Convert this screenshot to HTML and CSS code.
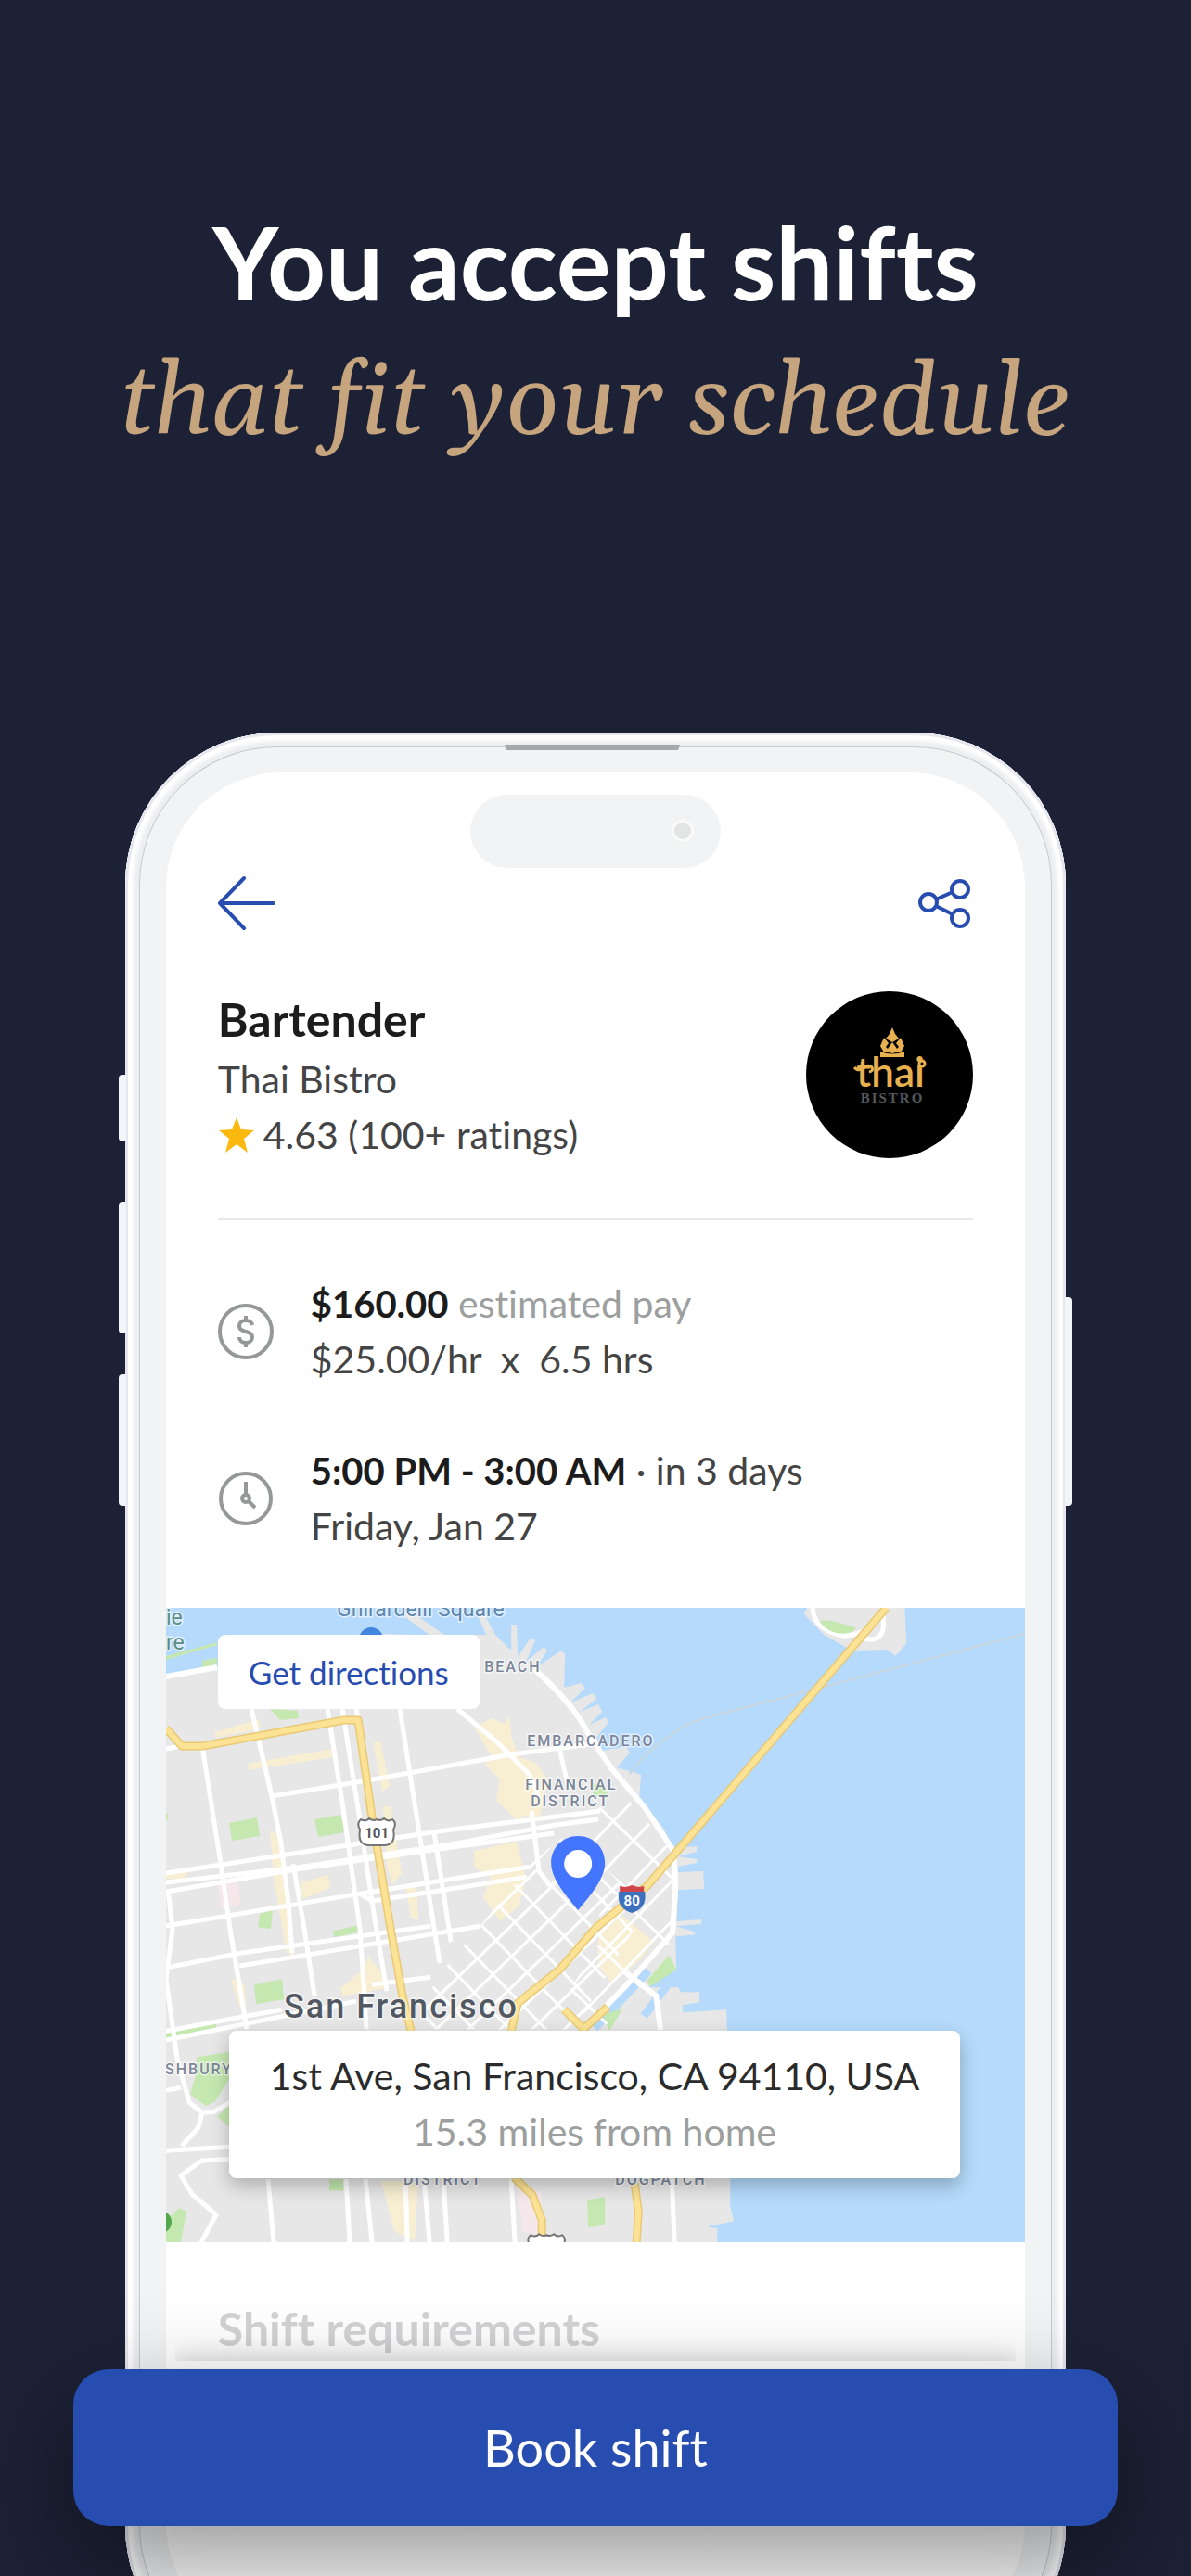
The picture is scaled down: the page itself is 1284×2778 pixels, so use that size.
FILE: index.html
```html
<!DOCTYPE html>
<html lang="en">
<head>
<meta charset="UTF-8">
<meta name="viewport" content="width=device-width, initial-scale=1.0">
<title>Book a shift</title>
<link rel="stylesheet" href="styles.css">
</head>
<body>
  <div class="page">
    <h1 class="headline">
      You accept shifts
      <em>that fit your schedule</em>
    </h1>

    <div class="phone">
      <span class="side-key key-mute"></span>
      <span class="side-key key-up"></span>
      <span class="side-key key-down"></span>
      <span class="side-key key-power"></span>
      <span class="speaker"></span>

      <main class="screen">
        <div class="island"><span class="camera"></span></div>

        <nav class="topbar">
          <a href="#" class="icon-link" aria-label="Back">
            <svg width="64" height="60" viewBox="0 0 64 60" fill="none" stroke="#284db1" stroke-width="4" stroke-linecap="round" stroke-linejoin="round">
              <path d="M60 30H2M28 3L2 30l26 27"/>
            </svg>
          </a>
          <a href="#" class="icon-link" aria-label="Share">
            <svg width="60" height="60" viewBox="0 0 60 60" fill="none" stroke="#284db1" stroke-width="4">
              <circle cx="12" cy="29" r="9"/>
              <circle cx="46" cy="15" r="9"/>
              <circle cx="46" cy="46" r="9"/>
              <path d="M20 26l18-8M20 33l18 9"/>
            </svg>
          </a>
        </nav>

        <section class="job">
          <div>
            <h2>Bartender</h2>
            <p>Thai Bistro</p>
            <p class="rating">
              <svg width="40" height="40" viewBox="0 0 40 40" fill="#fbb90f">
                <path d="M20 1l5 13 14 1-11 9 4 15-12-9-12 9 4-15L1 15l14-1z"/>
              </svg>
              4.63 (100+ ratings)
            </p>
          </div>
          <svg class="avatar" viewBox="0 0 180 180">
            <circle cx="90" cy="90" r="90"/>
            <g fill="#e9b04f">
              <path d="M93 39l3 7 4 5-7 4-7-4 4-5z"/>
              <path d="M84 50l5 6-3 4 4 4-6 2-4-7zM102 50l-5 6 3 4-4 4 6 2 4-7z"/>
              <path d="M93 55l3 4 4 6-7 2-7-2 4-6z"/>
              <path d="M80 65q13 5 26 0v6H80z"/>
            </g>
            <text class="logo-name" x="91" y="103">thai</text>
            <g fill="none" stroke="#e9b04f" stroke-width="3">
              <path d="M52 82q4 5 10 1 6-5 9-1 2 4-3 5"/>
              <circle cx="125" cy="78" r="3"/>
            </g>
            <text class="logo-sub" x="93" y="120">BISTRO</text>
          </svg>
        </section>

        <section class="details">
          <div class="detail">
            <svg width="60" height="60" viewBox="0 0 60 60" fill="none" stroke="#949897" stroke-width="4">
              <circle cx="30" cy="30" r="28"/>
              <path d="M37 23c-1-4-4-5-7-5-4 0-7 2-7 6 0 8 14 4 14 12 0 4-3 6-7 6s-7-2-7-6M30 13v5M30 42v5"/>
            </svg>
            <div>
              <p><strong>$160.00</strong> <span class="muted">estimated pay</span></p>
              <p>$25.00/hr &nbsp;x&nbsp; 6.5 hrs</p>
            </div>
          </div>
          <div class="detail">
            <svg width="60" height="60" viewBox="0 0 60 60" fill="none" stroke="#949897" stroke-width="4">
              <circle cx="30" cy="30" r="27"/>
              <circle cx="30" cy="30" r="4"/>
              <path d="M30 12v14M33 33l7 7"/>
            </svg>
            <div>
              <p><strong>5:00 PM - 3:00 AM</strong> · in 3 days</p>
              <p>Friday, Jan 27</p>
            </div>
          </div>
        </section>

        <section class="map">
          <svg class="map-canvas" viewBox="0 0 926 684" preserveAspectRatio="xMidYMid slice">
            <defs>
              <pattern id="blocks" width="28" height="24" patternUnits="userSpaceOnUse" patternTransform="translate(414 300) rotate(-44)">
                <path d="M0 0H28M0 0V24" stroke="#fff" stroke-width="6"/>
              </pattern>
              <pattern id="wide-blocks" width="54" height="30" patternUnits="userSpaceOnUse" patternTransform="translate(480 230) rotate(-46)">
                <path d="M0 0H54M0 0V30" stroke="#fff" stroke-width="6"/>
              </pattern>
              <path id="highways" d="M0 130L17 149H39L192 121H207L222 226 242 346 255 419 264 456M375 614L395 633 405 660V684M505 620L509 650 507 684M776 0L545 269 519 299 462 346 425 389 379 426 372 456M476 430L450 454 429 433"/>
            </defs>
            <rect width="926" height="684" fill="#b5dafb"/>
            <!-- peninsula with its piers -->
            <path fill="#e7e7e7" d="M0 74L55 64 150 40 238 28 285 30 255 8 264 4 300 29H345L335 6 341 3 355 29 372 46 372 18 378 18 379 53 393 32 398 35 388 58 407 42 411 46 399 64 426 46 430 50 429 86 447 81 452 86 436 102 460 92 464 98 446 112 466 104 470 112 456 126 474 118 477 123 464 140 470 154 496 150 500 156 486 172 512 180 510 206 535 236 547 259 572 257V263L552 268 572 271V275L552 279V285L579 284 580 303 552 304 550 338 577 336V341L549 343 570 349V352L549 354 550 389 519 409H552L555 414H575V425L557 428V436L604 433 608 616V646L612 661 583 667 594 669V684H0z"/>
            <path fill="#e7e7e7" d="M687 6l4-6h105l2 38-12 14-9-7-38 1-30-17z"/>
            <path d="M697 0q0 14 12 22 18 12 34 6 10-2 12-8M773 0v18q0 16-14 16-8 0-12-6" fill="none" stroke="#fff" stroke-width="5"/>
            <path fill="#c5e8b1" d="M704 14q10-3 40 8-8 8-22 5-12-3-18-13z"/>
            <path d="M462 453l58-62M545 400l-30 40" stroke="#b5dafb" stroke-width="9"/>

            <!-- commercial areas -->
            <path fill="#f8efd3" d="M332 128l20-9 12 6 6-8 2 22 8 22 18 6 16 20-6 12-6 30-14-6-10 6-22-22 4-22-16-16 6-10zM332 262l46-10 10 40-8 30-20 16-18-26 8-22-18-10zM223 146l8-2 10 48-8 6zM234 214h8l12 72-10 12-6-18zM52 134l48-14 2 10-48 10zM88 168l90-16 1 9-90 14zM112 240l8 4 10 70 8 60-8-2-14-80zM145 296l30-8 2 14-30 12zM188 410l26-22 4-12 14 16 4 18-46 8zM232 618h40l-4 64-22-10zM70 400l14 4 4 50-14-40zM258 300l12-2 2 38-8-2zM466 350l26-18 34 28-16 20-30 24-14-18zM0 284h24l-4 8H0z"/>
            <path fill="#f6e8ea" d="M56 296l22-2 2 26-20 4zM378 620l26 10 2 46-22-4z"/>
            <!-- parks -->
            <path fill="#c5e8b1" d="M68 232l30-6 3 20-30 5zM160 228l28-5 5 19-29 5zM112 109l30 2 1 8-20 2zM101 330l14-4-2 20-14-2zM180 348l28-6 1 7-28 6zM95 406l30-6 2 22-30 5zM0 457l54-9v5L0 464zM0 222h2v6l-2 1zM33 484l40-6v22L53 532l-10 5-17-13 6-20zM55 548l20-18v36zM176 616h15v12h-15zM0 660l14-13 8 3-6 34H0zM454 638l19-3v30l-18 3zM459 189l14 3 4 14-16-4zM518 402l24-28 8 16-28 18zM474 448l-2-10 20-6-14 24zM39 57l16-3v9l-16 3zM0 52l55-15v3L0 56z"/>
            <circle cx="-6" cy="662" r="12" fill="#54a64f"/>

            <!-- dense downtown grid -->
            <path fill="url(#blocks)" d="M388 284L462 272 520 320 440 454H268L292 398z"/>
            <path fill="url(#wide-blocks)" d="M388 280L466 216 492 200 545 260 550 350 516 404 470 454 430 420 480 340z"/>

            <g fill="none" stroke="#fff" stroke-width="5" stroke-linejoin="round">
              <path stroke-width="6" d="M0 74L55 64M397 66Q440 105 454 134L480 173 515 214 547 262 549 300 546 350 495 408 458 446M494 392L528 418 533 455"/>
              <path d="M0 152L20 148M39 149L59 276 69 346 87 454M92 109L114 203 124 254 132 320 136 372M137 276L149 346 160 418M174 109L190 210 209 346 216 454M190 109L206 210 222 316 225 336 238 413M205 109L214 170M252 109L273 243 289 346 295 383M289 243L305 346 307 360M314 109L356 144 392 180 402 205M424 152L434 195M394 219L402 284 414 300"/>
              <path d="M0 286L130 266 300 240 468 219M0 296L140 280 300 256 420 234 466 228M0 306L140 282 280 262 418 243M114 203L206 188 372 158 465 146M0 343L209 308 392 279M209 308L222 316 389 290M0 388L75 373 285 343M79 386L200 366 339 343M0 456L125 433M0 466L205 424M222 406L285 398"/>
              <path d="M2 303L7 346 0 400 12 486 25 533 39 544 52 543 69 533M39 544L35 560 17 580M0 520L16 517M0 585L69 581M69 594L38 596 16 612 28 632 54 654 38 684M110 616L116 684M194 616L198 684M215 616L222 684M258 616L260 684M278 616L284 684M299 616L303 684M372 616L376 684M545 616L548 684"/>
            </g>
            <path d="M499 179Q522 150 542 139 560 124 579 119L660 98 925 28" fill="none" stroke="#c9d5dc" stroke-width="2"/>

            <use href="#highways" class="highway-edge"/>
            <use href="#highways" class="highway-core"/>

            <g class="map-label">
              <text class="place" x="184" y="9">Ghirardelli Square</text>
              <text class="park" x="0" y="18">ie</text>
              <text class="park" x="0" y="45">re</text>
              <text class="area" x="343" y="69">BEACH</text>
              <text class="area" x="389" y="149">EMBARCADERO</text>
              <text class="area" x="387" y="196">FINANCIAL</text>
              <text class="area" x="393" y="214">DISTRICT</text>
              <text class="area" x="-1" y="503">SHBURY</text>
              <text class="area" x="256" y="622">DISTRICT</text>
              <text class="area" x="484" y="622">DOGPATCH</text>
              <text class="city" x="127" y="442">San Francisco</text>
            </g>

            <circle cx="221" cy="34" r="13" fill="#4286e0"/>
            <g fill="#fff" stroke="#757575" stroke-width="2">
              <path d="M210 228q5 3 9-1 4 3 8 1 4 2 8-1 4 4 9 1 5 4 1 11 3 17-10 17h-16q-13 0-10-17-4-7 1-11z"/>
              <path d="M393 676q5 3 9-1 4 3 8 1 4 2 8-1 4 4 9 1 5 4 1 11h-36q-4-7 1-11z"/>
            </g>
            <text class="shield-no" x="227" y="248">101</text>
            <path fill="#3c72bd" d="M488 306h28q3 18-14 23-17-5-14-23z"/>
            <path fill="#d0454a" d="M489 300q7 2 13-1 6 3 13 1v6h-26z"/>
            <text class="shield-no interstate" x="502" y="321">80</text>

            <path fill="#4375ff" d="M444 246c-17 0-29 13-29 29 0 17 15 34 29 51 14-17 29-34 29-51 0-16-12-29-29-29z"/>
            <circle cx="444" cy="276" r="15" fill="#fff"/>
          </svg>

          <a href="#" class="directions">Get directions</a>
          <div class="address">
            <p>1st Ave, San Francisco, CA 94110, USA</p>
            <p class="muted">15.3 miles from home</p>
          </div>
        </section>

        <h2 class="requirements">Shift requirements</h2>
        <div class="sheet"></div>
      </main>
    </div>

    <button type="button" class="book">Book shift</button>
  </div>
</body>
</html>
```
FILE: styles.css
```css
* {
  box-sizing: border-box;
}

body {
  margin: 0;
  background-color: #1c2135;
  font-family: Lato, "Liberation Sans", sans-serif;
  font-variant-ligatures: none;
  color: #444;
}

h1, h2, p {
  margin: 0;
}

.page {
  position: relative;
  display: flex;
  flex-direction: column;
  min-height: 100vh;
  overflow: hidden;
}

.headline {
  padding: 209px 0 269px;
  color: #fff;
  font-size: 110px;
  font-weight: 700;
  line-height: 144px;
  text-align: center;
}

.headline em {
  display: block;
  color: #c5a47e;
  font-family: Gelasio, Georgia, "Liberation Serif", serif;
  font-size: 108px;
  font-weight: 400;
  line-height: 168px;
}

/* phone frame */
.phone {
  position: relative;
  display: flex;
  flex: 1 0 auto;
  width: 79%;
  margin: 0 auto -110px;
  padding: 43px 44px;
  border-radius: 164px;
  background-color: #f1f3f5;
  box-shadow: inset 0 0 0 3px #e6e7ee, inset 0 0 4px 9px #fff, inset 0 0 0 15px #eceef1, inset 0 0 0 16px #c6cace;
}

.side-key {
  position: absolute;
  width: 8px;
  background-color: #f4f5f8;
}

.key-mute, .key-up, .key-down {
  left: -7px;
  border-radius: 4px 0 0 4px;
}

.key-mute {
  top: 369px;
  height: 72px;
}

.key-up {
  top: 506px;
  height: 142px;
}

.key-down {
  top: 692px;
  height: 142px;
}

.key-power {
  top: 609px;
  right: -7px;
  height: 225px;
  border-radius: 0 4px 4px 0;
}

.speaker {
  position: absolute;
  top: 13px;
  left: 50%;
  width: 189px;
  height: 6px;
  margin-left: -98px;
  background-color: #a6a7a9;
  clip-path: polygon(0 0, 100% 0, 99% 100%, 1% 100%);
}

.screen {
  position: relative;
  display: flex;
  flex: 1;
  flex-direction: column;
  padding-top: 111px;
  border-radius: 124px;
  background-color: #fff;
  overflow: hidden;
  font-size: 41px;
  line-height: 60px;
}

.island {
  position: absolute;
  top: 24px;
  left: 50%;
  width: 270px;
  height: 79px;
  border-radius: 40px;
  background-color: #f1f3f4;
  transform: translateX(-50%);
}

.camera {
  position: absolute;
  top: 27px;
  right: 29px;
  width: 24px;
  height: 24px;
  border: 3px solid #fafafa;
  border-radius: 50%;
  background-color: #e3e5e4;
}

.topbar {
  display: flex;
  justify-content: space-between;
  margin: 0 56px 60px;
}

.icon-link {
  display: flex;
}

.job {
  display: flex;
  align-items: center;
  justify-content: space-between;
  margin: 0 56px;
  padding-bottom: 59px;
  border-bottom: 3px solid #e8e8e8;
}

h2 {
  color: #1c1c1c;
  font-size: 50px;
  font-weight: 700;
  line-height: 70px;
}

.rating {
  display: flex;
  align-items: center;
  gap: 9px;
}

.avatar {
  width: 180px;
  height: 180px;
}

.logo-name {
  fill: #e9b04f;
  font-size: 44px;
  font-weight: 600;
  text-anchor: middle;
}

.logo-sub {
  fill: #55585a;
  font-family: "Liberation Serif", serif;
  font-size: 15px;
  font-weight: 700;
  letter-spacing: 2px;
  text-anchor: middle;
}

.details {
  display: flex;
  flex-direction: column;
  gap: 60px;
  padding: 60px 56px 58px;
}

.detail {
  display: flex;
  align-items: center;
  gap: 40px;
}

strong {
  color: #1c1c1c;
  font-size: 40px;
}

.muted {
  color: #9c9f9e;
}

/* map */
.map {
  position: relative;
  aspect-ratio: 926 / 684;
  overflow: hidden;
}

.map-canvas {
  display: block;
  width: 100%;
  height: 100%;
}

.highway-edge, .highway-core {
  fill: none;
  stroke: #e9c973;
  stroke-width: 9px;
  stroke-linejoin: round;
}

.highway-core {
  stroke: #fbe294;
  stroke-width: 6px;
}

.map-label {
  font-family: Roboto, "Liberation Sans", sans-serif;
  fill: #7b869a;
  stroke: #fff;
  stroke-opacity: 0.6;
  stroke-width: 3px;
  paint-order: stroke;
}

.area {
  font-size: 16px;
  font-weight: 500;
  letter-spacing: 2px;
}

.place {
  fill: #5f86ac;
  font-size: 23px;
}

.park {
  fill: #5b8d86;
  font-size: 23px;
}

.city {
  fill: #525963;
  font-size: 36px;
  font-weight: 500;
  letter-spacing: 2px;
}

.shield-no {
  fill: #555;
  font-family: Roboto, "Liberation Sans", sans-serif;
  font-size: 15px;
  font-weight: 700;
  text-anchor: middle;
}

.interstate {
  fill: #fff;
}

.directions {
  position: absolute;
  top: 29px;
  left: 56px;
  padding: 10px 33px;
  border-radius: 8px;
  background-color: #fff;
  color: #284db1;
  font-size: 35px;
  text-decoration: none;
}

.address {
  position: absolute;
  right: 70px;
  bottom: 69px;
  left: 68px;
  padding: 19px 0 20px;
  border-radius: 8px;
  background-color: #fff;
  box-shadow: 0 8px 20px rgba(0, 0, 0, 0.25);
  color: #2b2b2b;
  text-align: center;
}

.requirements {
  padding: 58px 56px 0;
  color: #d3d3d5;
}

/* only the upper edge of the sheet throws a shadow */
.sheet {
  flex: 1 0 auto;
  margin: 0 10px;
  box-shadow: 0 -4px 24px rgba(0, 0, 0, 0.14);
  clip-path: inset(-40px 0 0 0);
}

/* call to action over the phone */
.book {
  position: absolute;
  right: 79px;
  bottom: 54px;
  left: 79px;
  height: 169px;
  border: none;
  border-radius: 38px;
  background-color: #284db1;
  box-shadow: 0 40px 110px rgba(0, 0, 0, 0.42);
  color: #fff;
  font-family: inherit;
  font-size: 54px;
  font-variant-ligatures: none;
  cursor: pointer;
}
```
